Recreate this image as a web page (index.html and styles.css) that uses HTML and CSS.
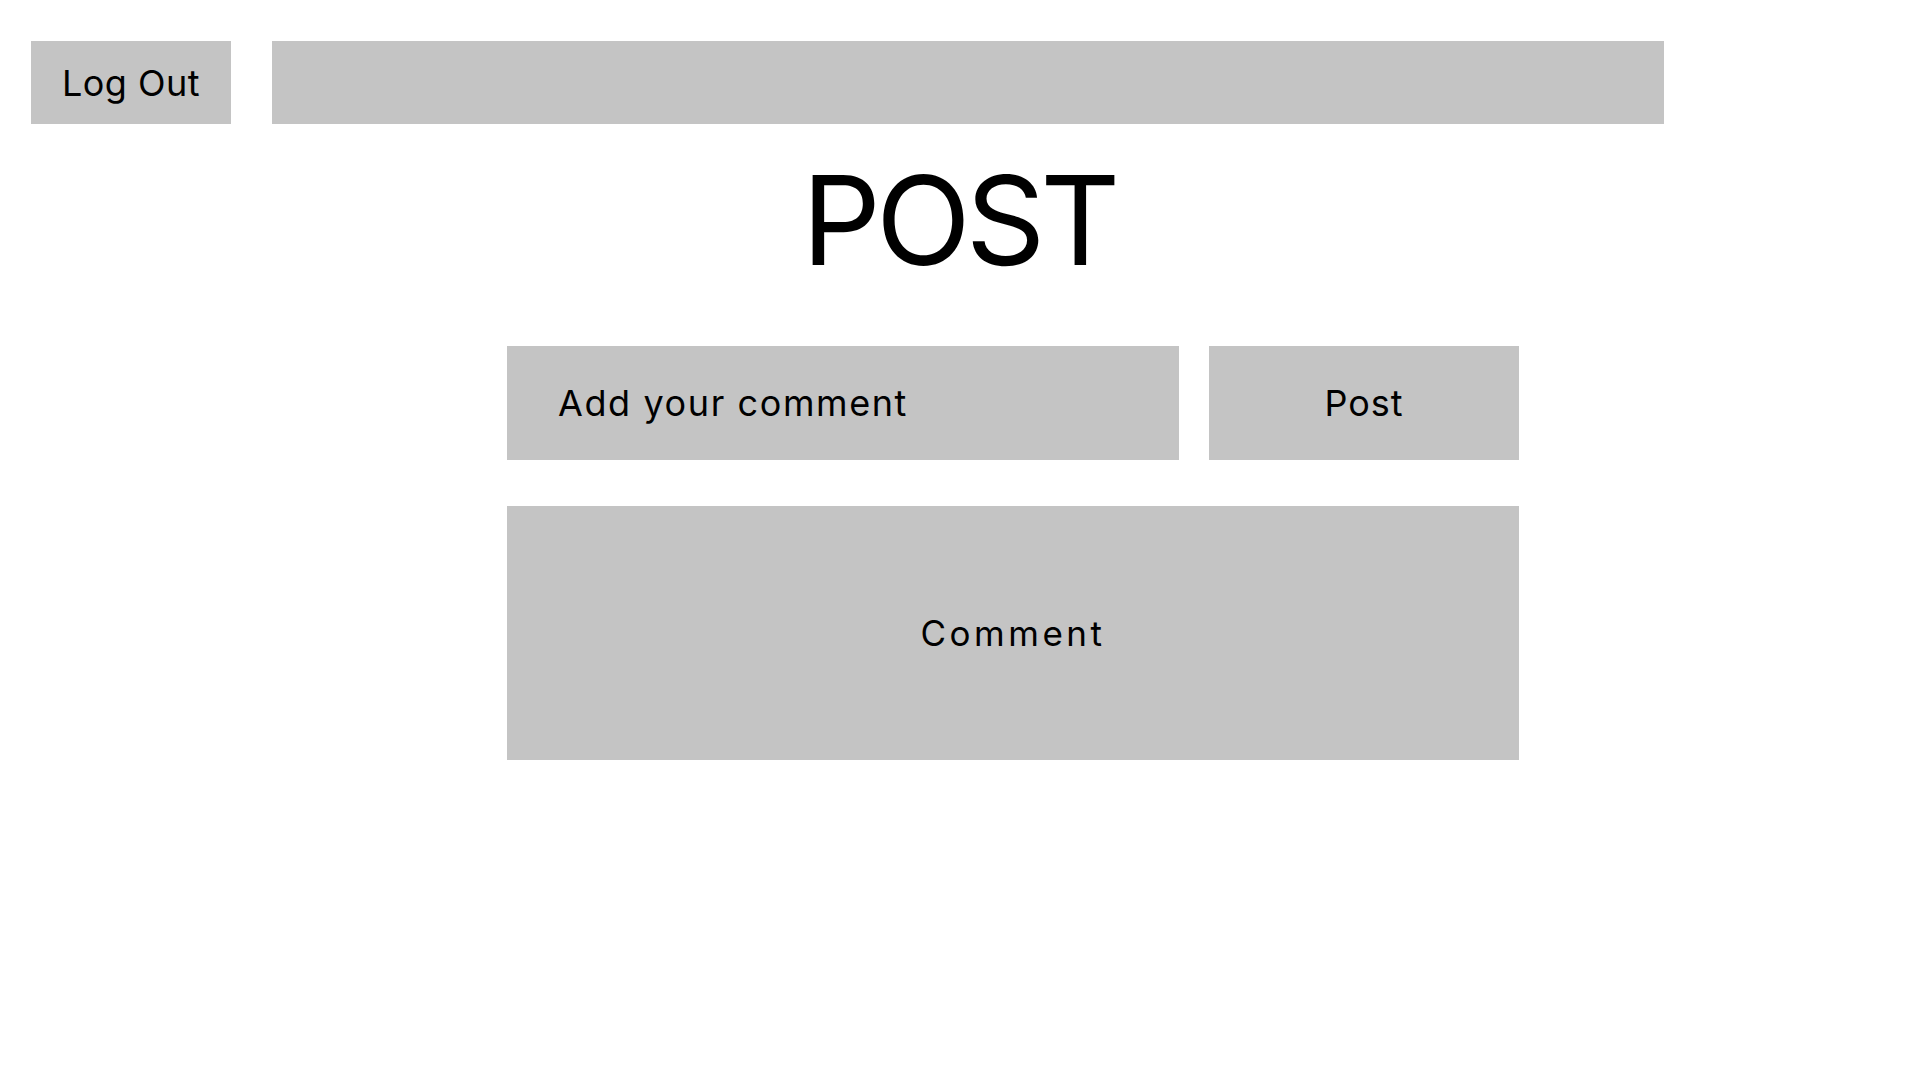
FILE: index.html
```html
<!DOCTYPE html>
<html lang="en">
<head>
<meta charset="utf-8">
<title>Post</title>
<link rel="stylesheet" href="styles.css">
</head>
<body>
  <header class="topbar">
    <button class="logout">Log Out</button>
    <div class="bar"></div>
  </header>
  <h1 class="title">POST</h1>
  <main class="content">
    <div class="form-row">
      <div class="input">Add your comment</div>
      <button class="post-btn">Post</button>
    </div>
    <div class="comment">Comment</div>
  </main>
</body>
</html>
```

FILE: styles.css
```css
* { box-sizing: border-box; }
html, body { margin: 0; padding: 0; background: #ffffff; }
body {
  width: 1920px;
  height: 1080px;
  font-family: "Inter", "Liberation Sans", sans-serif;
  color: #000;
  overflow: hidden;
}
.topbar {
  display: flex;
  gap: 41px;
  padding: 41px 0 0 31px;
}
.logout {
  width: 200px;
  height: 83px;
  border: 0;
  margin: 0;
  padding: 0;
  background: #c4c4c4;
  font-family: inherit;
  font-size: 36px;
  color: #000;
  letter-spacing: 0.5px;
}
.bar {
  width: 1392px;
  height: 83px;
  background: #c4c4c4;
}
.title {
  margin: 34px 0 0 0;
  text-align: center;
  font-size: 124px;
  font-weight: 400;
  line-height: 1;
  letter-spacing: -5px;
  text-indent: -3px;
}
.content {
  margin: 64px 0 0 507px;
  width: 1012px;
}
.form-row {
  display: flex;
  gap: 30px;
}
.input {
  width: 672px;
  height: 114px;
  background: #c4c4c4;
  display: flex;
  align-items: center;
  padding-left: 51px;
  font-size: 36px;
  letter-spacing: 1.6px;
}
.post-btn {
  width: 310px;
  height: 114px;
  border: 0;
  margin: 0;
  padding: 0;
  background: #c4c4c4;
  font-family: inherit;
  font-size: 36px;
  color: #000;
  letter-spacing: 1px;
}
.comment {
  margin-top: 46px;
  height: 254px;
  background: #c4c4c4;
  display: flex;
  align-items: center;
  justify-content: center;
  font-size: 35px;
  letter-spacing: 3.5px;
}
```
